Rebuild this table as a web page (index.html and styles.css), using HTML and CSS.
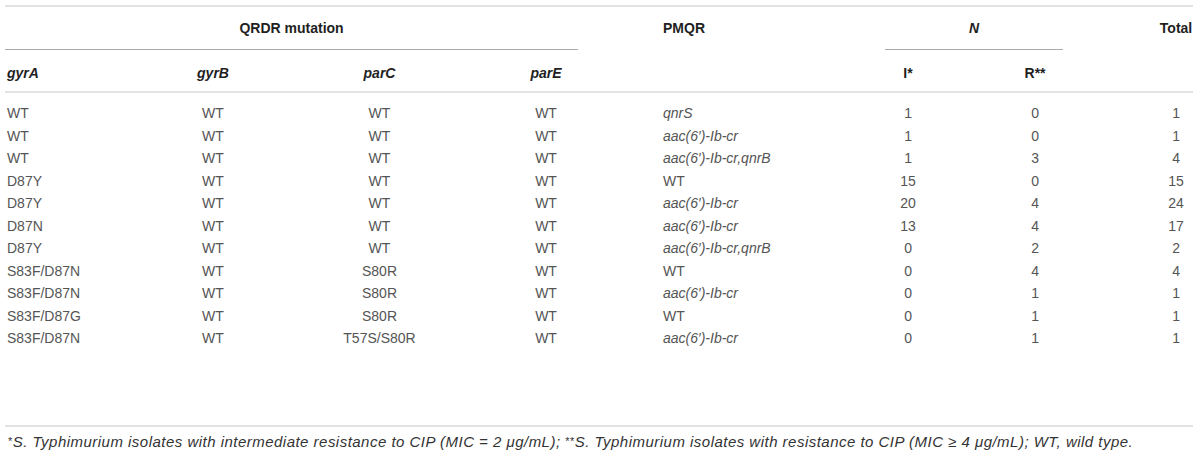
FILE: index.html
```html
<!DOCTYPE html>
<html lang="en">
<head>
    <meta charset="UTF-8">
    <meta name="viewport" content="width=device-width, initial-scale=1.0">
    <title>QRDR mutations and PMQR genes</title>
    <link rel="stylesheet" href="styles.css">
</head>
<body>

<div class="table-wrap">
    <table class="mic-table">
        <colgroup>
            <col class="c-gyra">
            <col class="c-gyrb">
            <col class="c-parc">
            <col class="c-pare">
            <col class="c-pmqr">
            <col class="c-i">
            <col class="c-r">
            <col class="c-total">
        </colgroup>
        <thead>
            <tr class="head-top">
                <th colspan="4"><div class="group-rule rule-qrdr">QRDR mutation</div></th>
                <th class="left pmqr">PMQR</th>
                <th colspan="2"><div class="group-rule rule-n"><em>N</em></div></th>
                <th class="total">Total</th>
            </tr>
            <tr class="head-sub">
                <th class="left first"><em>gyrA</em></th>
                <th><em>gyrB</em></th>
                <th><em>parC</em></th>
                <th><em>parE</em></th>
                <th class="left pmqr"></th>
                <th>I*</th>
                <th>R**</th>
                <th class="total"></th>
            </tr>
        </thead>
        <tbody>
            <tr><td class="left first">WT</td><td>WT</td><td>WT</td><td>WT</td><td class="left pmqr"><em>qnrS</em></td><td>1</td><td>0</td><td class="total">1</td></tr>
            <tr><td class="left first">WT</td><td>WT</td><td>WT</td><td>WT</td><td class="left pmqr"><em>aac(6′)-Ib-cr</em></td><td>1</td><td>0</td><td class="total">1</td></tr>
            <tr><td class="left first">WT</td><td>WT</td><td>WT</td><td>WT</td><td class="left pmqr"><em>aac(6′)-Ib-cr,qnrB</em></td><td>1</td><td>3</td><td class="total">4</td></tr>
            <tr><td class="left first">D87Y</td><td>WT</td><td>WT</td><td>WT</td><td class="left pmqr">WT</td><td>15</td><td>0</td><td class="total">15</td></tr>
            <tr><td class="left first">D87Y</td><td>WT</td><td>WT</td><td>WT</td><td class="left pmqr"><em>aac(6′)-Ib-cr</em></td><td>20</td><td>4</td><td class="total">24</td></tr>
            <tr><td class="left first">D87N</td><td>WT</td><td>WT</td><td>WT</td><td class="left pmqr"><em>aac(6′)-Ib-cr</em></td><td>13</td><td>4</td><td class="total">17</td></tr>
            <tr><td class="left first">D87Y</td><td>WT</td><td>WT</td><td>WT</td><td class="left pmqr"><em>aac(6′)-Ib-cr,qnrB</em></td><td>0</td><td>2</td><td class="total">2</td></tr>
            <tr><td class="left first">S83F/D87N</td><td>WT</td><td>S80R</td><td>WT</td><td class="left pmqr">WT</td><td>0</td><td>4</td><td class="total">4</td></tr>
            <tr><td class="left first">S83F/D87N</td><td>WT</td><td>S80R</td><td>WT</td><td class="left pmqr"><em>aac(6′)-Ib-cr</em></td><td>0</td><td>1</td><td class="total">1</td></tr>
            <tr><td class="left first">S83F/D87G</td><td>WT</td><td>S80R</td><td>WT</td><td class="left pmqr">WT</td><td>0</td><td>1</td><td class="total">1</td></tr>
            <tr><td class="left first">S83F/D87N</td><td>WT</td><td>T57S/S80R</td><td>WT</td><td class="left pmqr"><em>aac(6′)-Ib-cr</em></td><td>0</td><td>1</td><td class="total">1</td></tr>
        </tbody>
    </table>

    <!-- Footnote -->
    <p class="footnote"><span class="star">*</span>S. Typhimurium isolates with intermediate resistance to CIP (MIC = 2 μg/mL); <span class="star">**</span>S. Typhimurium isolates with resistance to CIP (MIC ≥ 4 μg/mL); WT, wild type.</p>
</div>

</body>
</html>
```

FILE: styles.css
```css
body {
    margin: 0;
    padding: 0;
    background: #ffffff;
    font-family: 'Liberation Sans', Arial, sans-serif;
    font-size: 14px;
    color: #555555;
}

.table-wrap {
    padding: 5px 7px 0 5px;
}

/* Main table */
.mic-table {
    width: 1188px;
    table-layout: fixed;
    border-collapse: collapse;
    border-top: 2px solid #e3e3e3;
}

.c-gyra { width: 125px; }
.c-gyrb { width: 166px; }
.c-parc { width: 167px; }
.c-pare { width: 166px; }
.c-pmqr { width: 221px; }
.c-i { width: 116px; }
.c-r { width: 138px; }
.c-total { width: 89px; }

.mic-table th,
.mic-table td {
    padding: 0;
    text-align: center;
    white-space: nowrap;
}

.mic-table th {
    color: #1f1f1f;
    font-weight: bold;
}

.mic-table .left {
    text-align: left;
}

.mic-table .first {
    padding-left: 2px;
}

.mic-table .pmqr {
    padding-left: 34px;
}

.mic-table .total {
    padding-left: 55px;
}

/* Header rows */
.head-top th {
    vertical-align: top;
    line-height: 42px;
}

.group-rule {
    border-bottom: 1px solid #ababab;
}

.rule-qrdr {
    margin-right: 51px;
}

.rule-n {
    margin: 0 41px 0 35px;
}

.head-sub th {
    line-height: 16px;
    padding-top: 15px;
    padding-bottom: 10px;
    border-bottom: 2px solid #e3e3e3;
}

/* Body rows */
.mic-table td {
    line-height: 22.5px;
}

.mic-table tbody tr:first-child td {
    padding-top: 9px;
}

.mic-table tbody tr:last-child td {
    padding-bottom: 75px;
}

/* Footnote */
.footnote {
    margin: 0;
    padding: 5px 0 0 3px;
    border-top: 2px solid #e3e3e3;
    font-style: italic;
    font-size: 15px;
    letter-spacing: 0.48px;
    line-height: 18px;
    color: #333;
}

.footnote .star {
    font-style: normal;
    font-size: 11px;
    vertical-align: 2px;
}
```
